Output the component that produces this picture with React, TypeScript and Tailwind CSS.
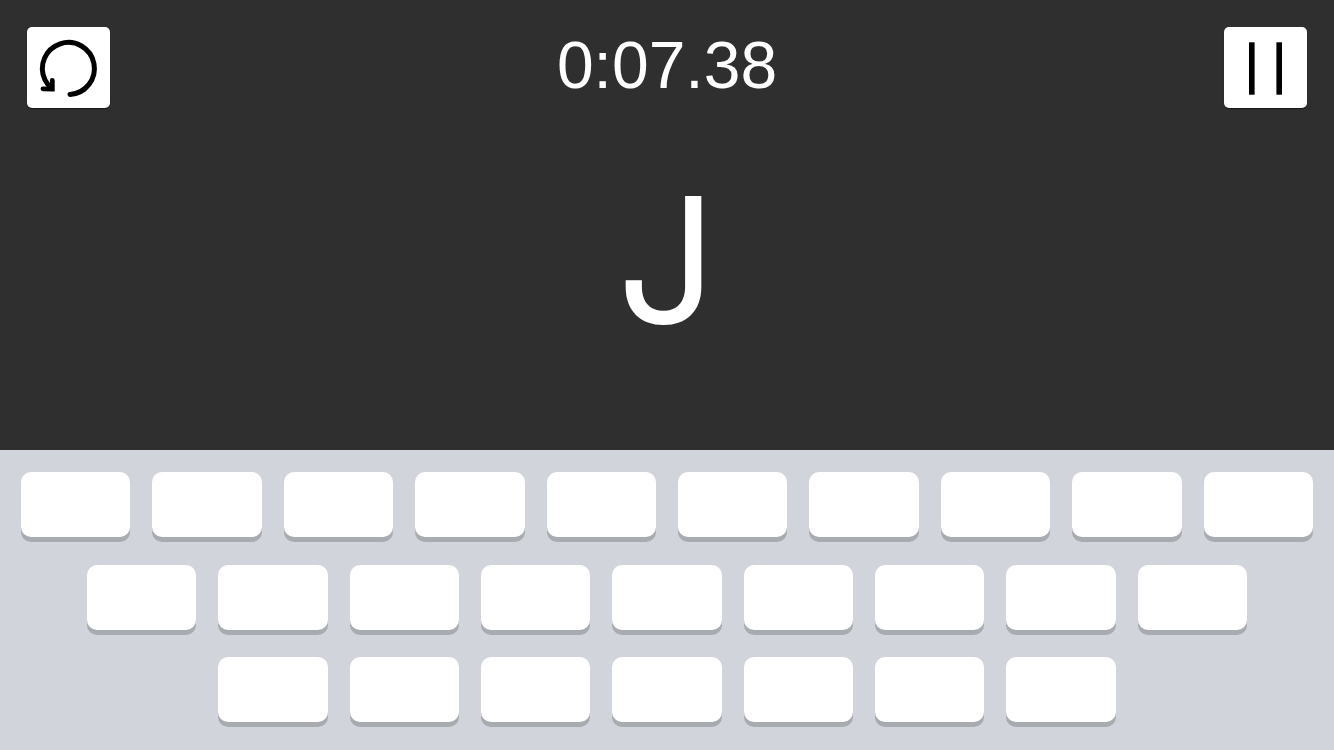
import type { ReactNode } from "react"

const KEY_ROWS = ["QWERTYUIOP", "ASDFGHJKL", "ZXCVBNM"]

interface ControlButtonProps {
  label: string
  children: ReactNode
}

function ControlButton({ label, children }: ControlButtonProps) {
  return (
    <button
      type="button"
      aria-label={label}
      className="h-[81px] w-[83px] shrink-0 rounded-[5px] bg-white text-black shadow-[0_1px_1px_rgba(0,0,0,0.5)]"
    >
      {children}
    </button>
  )
}

function RestartIcon() {
  return (
    <svg viewBox="0 0 83 81" className="h-full w-full" fill="none" stroke="currentColor" aria-hidden="true">
      <path
        d="M43 67.4A26 26 0 1 0 18 52.8Q20.5 57.5 24.5 61.5"
        strokeWidth="5"
        strokeLinecap="round"
      />
      <path d="M25.3 53.4L25.3 62.1L16 61.9" strokeWidth="4.8" strokeLinecap="round" />
    </svg>
  )
}

function PauseIcon() {
  return (
    <svg viewBox="0 0 83 81" className="h-full w-full" fill="currentColor" aria-hidden="true">
      <rect x="25" y="15.3" width="5.6" height="52.4" />
      <rect x="52.4" y="15.3" width="5.6" height="52.4" />
    </svg>
  )
}

function Keyboard() {
  return (
    <div className="flex h-[40vh] min-h-[260px] flex-col justify-evenly bg-[#d1d4db] px-[10px] pb-px">
      {KEY_ROWS.map((row) => (
        <div key={row} className="flex justify-center pb-[5px]">
          {row.split("").map((letter) => (
            <div key={letter} className="w-1/10 px-[11px]">
              <button
                type="button"
                aria-label={letter}
                className="block h-[65px] w-full rounded-[10px] bg-white shadow-[0_5px_0_#a8abb0]"
              />
            </div>
          ))}
        </div>
      ))}
    </div>
  )
}

export default function App() {
  return (
    <div className="flex min-h-screen flex-col bg-[#2f2f2f] font-['Liberation_Sans',Arial,sans-serif] text-white">
      <header className="flex items-start justify-between px-[27px] pt-[27px]">
        <ControlButton label="Restart">
          <RestartIcon />
        </ControlButton>
        <time className="text-[66px] leading-[76px]">0:07.38</time>
        <ControlButton label="Pause">
          <PauseIcon />
        </ControlButton>
      </header>
      <main className="flex flex-1 items-start justify-center pt-[52px]">
        <p className="font-['Inter',sans-serif] text-[174px] leading-[200px]">J</p>
      </main>
      <Keyboard />
    </div>
  )
}
